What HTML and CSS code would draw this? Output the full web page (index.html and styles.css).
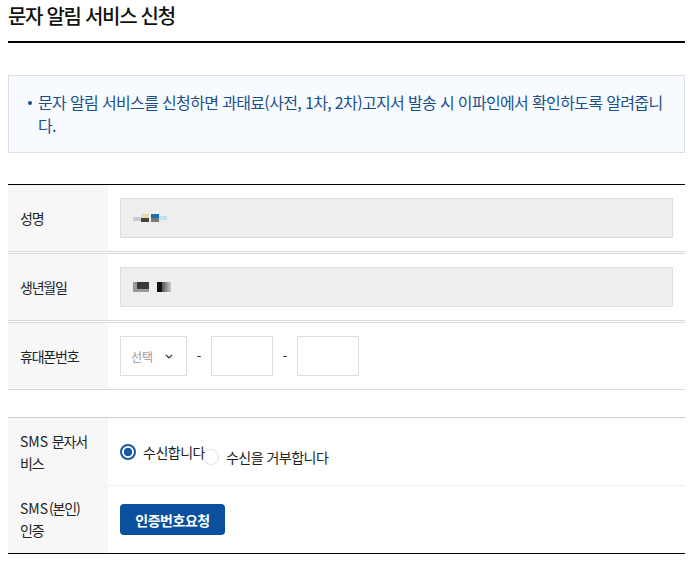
FILE: index.html
```html
<!DOCTYPE html>
<html lang="ko">
<head>
<meta charset="utf-8">
<title>문자 알림 서비스 신청</title>
<link rel="stylesheet" href="styles.css">
</head>
<body>
<div class="page">
  <h1 class="title">문자 알림 서비스 신청</h1>

  <div class="notice">
    <ul class="notice-list">
      <li>문자 알림 서비스를 신청하면 과태료(사전, 1차, 2차)고지서 발송 시 이파인에서 확인하도록 알려줍니다.</li>
    </ul>
  </div>

  <div class="form-table first">
    <div class="row">
      <div class="label">성명</div>
      <div class="cell"><div class="readonly"><span class="blur blur-name"><i class="p1"></i><i class="p2"></i><i class="p3"></i><i class="p4"></i></span></div></div>
    </div>
    <div class="row">
      <div class="label">생년월일</div>
      <div class="cell"><div class="readonly"><span class="blur blur-birth"><i class="b1"></i><i class="b2"></i><i class="b3"></i></span></div></div>
    </div>
    <div class="row">
      <div class="label">휴대폰번호</div>
      <div class="cell phone">
        <div class="select"><span class="select-text">선택</span>
          <svg class="chev" width="8" height="5" viewBox="0 0 8 5"><path d="M1 1l3 3 3-3" fill="none" stroke="#333" stroke-width="1.2"/></svg>
        </div>
        <span class="dash">-</span>
        <div class="box"></div>
        <span class="dash">-</span>
        <div class="box"></div>
      </div>
    </div>
  </div>

  <div class="form-table second">
    <div class="row">
      <div class="label"><span><span class="en">SMS</span> 문자서<br>비스</span></div>
      <div class="cell radios">
        <label class="radio on"><span class="dot"></span><span>수신합니다</span></label>
        <label class="radio off"><span class="dot"></span><span>수신을 거부합니다</span></label>
      </div>
    </div>
    <div class="row">
      <div class="label"><span><span class="en">SMS</span>(본인)<br>인증</span></div>
      <div class="cell"><button class="btn" type="button">인증번호요청</button></div>
    </div>
  </div>
</div>
</body>
</html>
```

FILE: styles.css
```css
* { box-sizing: border-box; }
html, body { margin: 0; padding: 0; background: #fff; }
body {
  font-family: "Noto Sans CJK KR", "Noto Sans", sans-serif;
  color: #222;
}
.page { width: 677px; margin-left: 8px; }

.title {
  margin: 0;
  font-size: 20px;
  font-weight: 500;
  letter-spacing: -1.3px;
  line-height: 32px;
  padding-bottom: 9px;
  border-bottom: 2px solid #000;
  color: #111;
}

.notice {
  margin-top: 32px;
  border: 1px solid #dcdfe3;
  background: #f7fbff;
  padding: 15px 18px;
}
.notice-list { margin: 0; padding: 0; list-style: none; }
.notice-list li {
  position: relative;
  padding-left: 11px;
  font-size: 16px;
  line-height: 23px;
  letter-spacing: -0.65px;
  color: #1b4e8c;
}
.notice-list li::before {
  content: "";
  position: absolute;
  left: 1px; top: 10px;
  width: 4px; height: 4px;
  border-radius: 50%;
  background: #1b4e8c;
}

.form-table.first { margin-top: 31px; border-top: 1px solid #000; }
.form-table.first .row { border-bottom: 1px solid #d9d9d9; height: 67px; }
.form-table.first .row + .row { border-top: 1px solid #d9d9d9; margin-top: 1px; height: 68px; }
.form-table.second { margin-top: 27px; border-top: 1px solid #cfcfcf; border-bottom: 1px solid #000; }
.form-table.second .row { height: 67px; }
.form-table.second .row + .row { height: 68px; }
.form-table.second .row + .row .cell { border-top: 1px solid #eeeeee; }

.row { display: flex; }
.label {
  width: 100px;
  flex: none;
  background: #f7f7f7;
  padding: 0 12px;
  display: flex;
  align-items: center;
  font-size: 14px;
  letter-spacing: -1.2px;
  line-height: 22px;
  color: #222;
}
.label .en { letter-spacing: 0; margin-right: 1px; }
.cell {
  flex: 1;
  display: flex;
  align-items: center;
  padding: 0 12px;
}
.readonly {
  width: 553px;
  height: 40px;
  background: #eeeeee;
  border: 1px solid #dedede;
  display: flex;
  align-items: center;
  padding-left: 12px;
}
.blur { display: inline-flex; align-items: center; height: 12px; }
.blur i { display: block; }
.blur-name .p1 { width: 8px; height: 4px; background: #c9ccd6; margin-top: 2px; }
.blur-name .p2 { width: 8px; height: 8px; background: linear-gradient(#e8dfa8 50%, #444 50%); }
.blur-name .p3 { width: 8px; height: 8px; background: linear-gradient(#1d6fb3 50%, #777 50%); margin-left: 2px; }
.blur-name .p4 { width: 8px; height: 4px; background: #bfe3ee; }
.blur-birth .b1 { width: 16px; height: 10px; background: #3a3a3a; box-shadow: inset 4px -3px 0 #9a9a9a; }
.blur-birth .b2 { width: 2px; }
.blur-birth .b3 { width: 14px; height: 10px; background: linear-gradient(90deg, #111 5px, #555 5px, #888 9px, #ccc 14px); margin-left: 6px; }

.phone { gap: 9px; }
.select {
  width: 67px; height: 40px;
  border: 1px solid #dedede;
  display: flex; align-items: center; justify-content: space-between;
  padding: 0 13px 0 10px;
  font-size: 12px;
  color: #999;
}
.chev { display: block; }
.dash { width: 6px; font-size: 14px; color: #333; text-align: center; }
.box { width: 62px; height: 40px; border: 1px solid #dedede; }

.radio {
  display: inline-flex;
  align-items: center;
  font-size: 14px;
  letter-spacing: -0.5px;
  color: #222;
}
.radio .dot {
  width: 16px; height: 16px; border-radius: 50%;
  margin-right: 7px;
  flex: none;
}
.radio.on .dot { border: 2px solid #1856a6; background: radial-gradient(circle, #1856a6 0 4px, #fff 4.5px); }
.radio.off { margin-top: 11px; margin-left: -2px; }
.radio.off .dot { border: 1px solid #e3e3e3; background: #fff; }

.btn {
  width: 105px; height: 31px;
  border: 0; border-radius: 4px;
  background: #0b4f9f;
  color: #fff;
  font-family: inherit;
  font-size: 14px;
  font-weight: 700;
  letter-spacing: -0.5px;
  padding: 0;
}
```
